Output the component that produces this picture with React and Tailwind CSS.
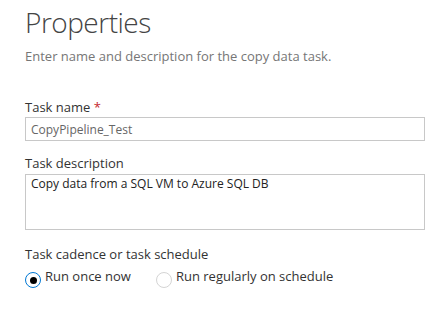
import { useState } from "react";

function Radio({ checked, label, onSelect }) {
  return (
    <label className="flex items-start gap-[4px] cursor-pointer" onClick={onSelect}>
      <span
        className={
          checked
            ? "mt-[4px] w-4 h-4 rounded-full border border-[#0078d4] flex items-center justify-center"
            : "mt-[4px] w-4 h-4 rounded-full border border-[#d4d4d4]"
        }
      >
        {checked && <span className="w-[7px] h-[7px] rounded-full bg-black" />}
      </span>
      <span className="text-[13px] leading-[17px] text-[#333]">{label}</span>
    </label>
  );
}

export default function App() {
  const [form, setForm] = useState({
    name: "CopyPipeline_Test",
    description: "Copy data from a SQL VM to Azure SQL DB",
  });
  const [cadence, setCadence] = useState("once");

  const handleChange = (e) => {
    setForm({ ...form, [e.target.name]: e.target.value });
  };

  return (
    <div className="w-[433px] h-[310px] bg-white pl-[25px] pr-[9px] pt-[3px] font-['Open_Sans',sans-serif]">
      <h1 className="text-[28px] leading-[38px] font-light tracking-[-0.5px] text-[#444]">Properties</h1>
      <p className="mt-[7px] text-[13px] leading-[17px] text-[#767676]">
        Enter name and description for the copy data task.
      </p>

      {/* Task name */}
      <div className="mt-[34px]">
        <div className="text-[13px] leading-[17px] text-[#333]">
          Task name <span className="text-[#c4262e]">*</span>
        </div>
        <input
          name="name"
          value={form.name}
          onChange={handleChange}
          className="mt-[1px] block w-[400px] h-[24px] border border-[#c8c8c8] px-[5px] text-[12px] text-[#666] outline-none"
        />
      </div>

      {/* Task description */}
      <div className="mt-[14px]">
        <div className="text-[13px] leading-[17px] text-[#333]">Task description</div>
        <textarea
          name="description"
          value={form.description}
          onChange={handleChange}
          className="mt-[2px] block w-[400px] h-[56px] border border-[#c8c8c8] px-[5px] pt-[1px] text-[12px] leading-[16px] text-[#222] outline-none resize-none"
        />
      </div>

      {/* Cadence */}
      <div className="mt-[16px]">
        <div className="text-[13px] leading-[17px] text-[#333]">Task cadence or task schedule</div>
        <div className="mt-[5px] flex gap-[25px]">
          <Radio checked={cadence === "once"} label="Run once now" onSelect={() => setCadence("once")} />
          <Radio
            checked={cadence === "schedule"}
            label="Run regularly on schedule"
            onSelect={() => setCadence("schedule")}
          />
        </div>
      </div>
    </div>
  );
}
